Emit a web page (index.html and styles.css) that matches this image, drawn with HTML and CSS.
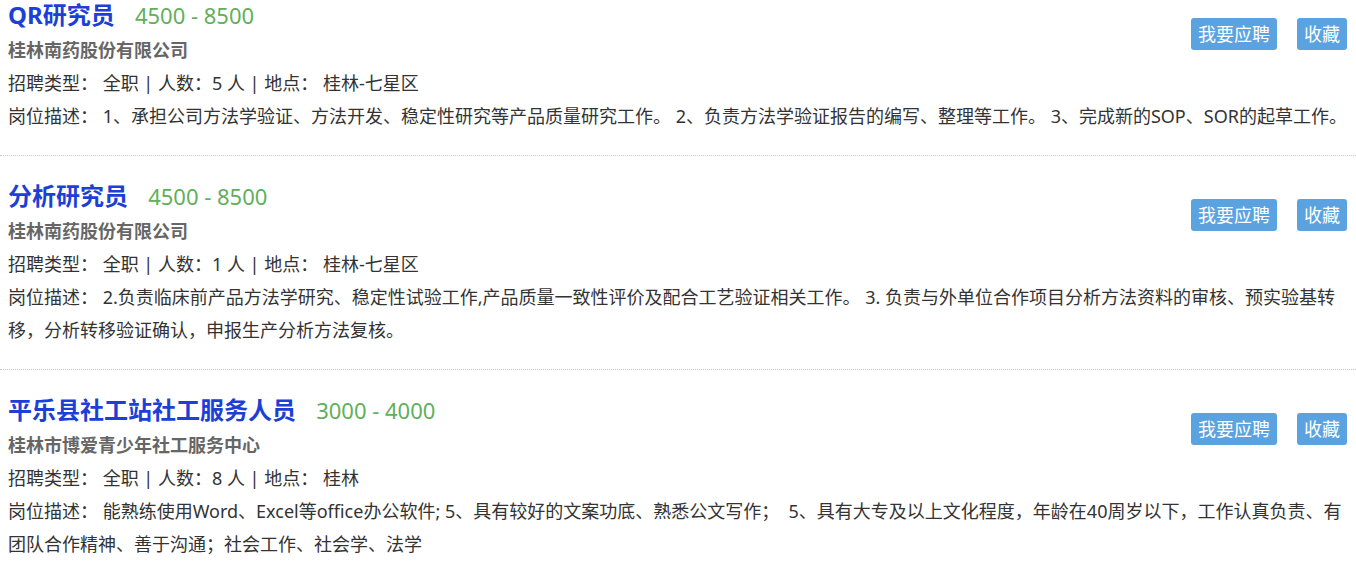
FILE: index.html
```html
<!DOCTYPE html>
<html lang="zh-CN">
<head>
    <meta charset="UTF-8">
    <meta name="viewport" content="width=device-width, initial-scale=1.0">
    <title>职位列表</title>
    <link rel="stylesheet" href="styles.css">
</head>
<body>
    <ul class="job-list">
        <li class="job-item">
            <div class="job-actions">
                <a class="btn" href="#">我要应聘</a>
                <a class="btn" href="#">收藏</a>
            </div>
            <div class="job-title">
                <a href="#">QR研究员</a>
                <span class="salary">4500 - 8500</span>
            </div>
            <p class="company">桂林南药股份有限公司</p>
            <p class="info">招聘类型： 全职 | 人数：5 人 | 地点： 桂林-七星区</p>
            <p class="desc">岗位描述： 1、承担公司方法学验证、方法开发、稳定性研究等产品质量研究工作。 2、负责方法学验证报告的编写、整理等工作。 3、完成新的SOP、SOR的起草工作。</p>
        </li>
        <li class="job-item">
            <div class="job-actions">
                <a class="btn" href="#">我要应聘</a>
                <a class="btn" href="#">收藏</a>
            </div>
            <div class="job-title">
                <a href="#">分析研究员</a>
                <span class="salary">4500 - 8500</span>
            </div>
            <p class="company">桂林南药股份有限公司</p>
            <p class="info">招聘类型： 全职 | 人数：1 人 | 地点： 桂林-七星区</p>
            <p class="desc">岗位描述： 2.负责临床前产品方法学研究、稳定性试验工作,产品质量一致性评价及配合工艺验证相关工作。 3. 负责与外单位合作项目分析方法资料的审核、预实验基转移，分析转移验证确认，申报生产分析方法复核。</p>
        </li>
        <li class="job-item">
            <div class="job-actions">
                <a class="btn" href="#">我要应聘</a>
                <a class="btn" href="#">收藏</a>
            </div>
            <div class="job-title">
                <a href="#">平乐县社工站社工服务人员</a>
                <span class="salary">3000 - 4000</span>
            </div>
            <p class="company">桂林市博爱青少年社工服务中心</p>
            <p class="info">招聘类型： 全职 | 人数：8 人 | 地点： 桂林</p>
            <p class="desc">岗位描述： 能熟练使用Word、Excel等office办公软件; 5、具有较好的文案功底、熟悉公文写作；&nbsp; 5、具有大专及以上文化程度，年龄在40周岁以下，工作认真负责、有团队合作精神、善于沟通；社会工作、社会学、法学</p>
        </li>
    </ul>
</body>
</html>
```

FILE: styles.css
```css
body {
    margin: 0;
    background: #fff;
    font-family: "Noto Sans", "Noto Sans CJK SC", sans-serif;
    color: #333;
    overflow: hidden;
}

.job-list {
    list-style: none;
    margin: -25px 0 0 0;
    padding: 0;
}

.job-item {
    padding: 21px 8px 22px 8px;
    border-bottom: 1px dotted #c8c8c8;
}

.job-item:last-child {
    border-bottom: none;
}

.job-actions {
    float: right;
    display: flex;
    gap: 20px;
    margin-top: 22px;
    margin-right: 1px;
}

.btn {
    display: block;
    height: 32px;
    line-height: 32px;
    padding: 0 7px;
    font-size: 18px;
    color: #fff;
    background-color: #5ba3e0;
    border-radius: 3px;
    text-decoration: none;
}

.job-title {
    height: 38px;
    line-height: 38px;
}

.job-title a {
    font-size: 24px;
    font-weight: bold;
    color: #1c3fd6;
    text-decoration: none;
}

.salary {
    margin-left: 16px;
    font-size: 22px;
    color: #5fb05a;
}

.company,
.info,
.desc {
    margin: 0;
    font-size: 18px;
    line-height: 33px;
}

.company {
    font-weight: bold;
    color: #666;
}
```
